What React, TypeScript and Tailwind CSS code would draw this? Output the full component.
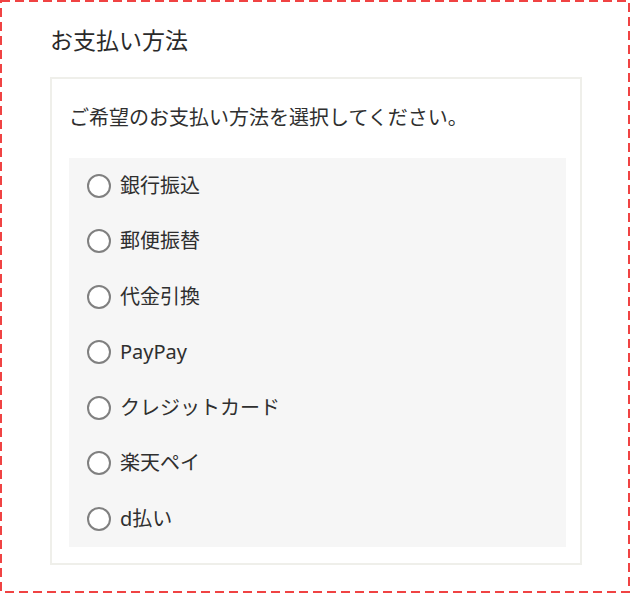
import React from "react";

const options = ["銀行振込", "郵便振替", "代金引換", "PayPay", "クレジットカード", "楽天ペイ", "d払い"];

export default function App() {
  return (
    <div
      className="relative w-[630px] h-[593px] box-border border-2 border-transparent bg-white pl-[48px] pt-[22px] text-[#2f2f2f]"
      style={{ fontFamily: '"Noto Sans", "Noto Sans CJK JP", sans-serif' }}
    >
      <svg className="absolute -left-[2px] -top-[2px] pointer-events-none" width="630" height="593">
        <rect x="1" y="1" width="628" height="591" fill="none" stroke="#f04343" strokeWidth="2" strokeDasharray="9 5" />
      </svg>
      <h2 className="text-[23px] leading-[33px] font-normal text-[#2a2a2a]">お支払い方法</h2>
      <div className="mt-[20px] w-[532px] border-2 border-[#efefea] pt-[24px] pb-[16px] pl-[17px]">
        <p className="text-[20px] leading-[30px]">ご希望のお支払い方法を選択してください。</p>
        <div className="mt-[25px] w-[497px] bg-[#f6f6f6]">
          {options.map((o) => (
            <label key={o} className="flex h-[55.5px] items-center pl-[18px] gap-[9px]">
              <span className="w-[24px] h-[24px] rounded-full border-[2.5px] border-[#808080] bg-white box-border" />
              <span className="text-[20px] leading-[30px]">{o}</span>
            </label>
          ))}
        </div>
      </div>
    </div>
  );
}
